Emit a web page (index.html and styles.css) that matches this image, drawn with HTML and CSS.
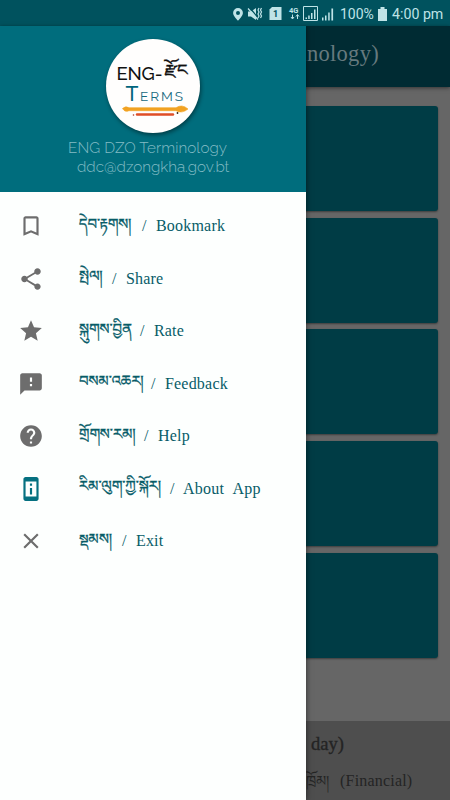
FILE: index.html
```html
<!DOCTYPE html>
<html lang="en">
<head>
<meta charset="utf-8">
<title>ENG DZO Terminology</title>
<link rel="stylesheet" href="styles.css">
</head>
<body>
<div class="phone">
  <div class="statusbar">
    <svg class="status-icons" width="108" height="26" viewBox="0 0 108 26" fill="#bfe3e7">
      <path fill-rule="evenodd" d="M6 7a4.900 4.900 0 0 0-4.900 4.900C1.100 15.200 6 19.500 6 19.500s4.900-4.300 4.900-7.600A4.900 4.900 0 0 0 6 7zm0 2.900a2 2 0 1 1 0 4 2 2 0 0 1 0-4z"/>
      <path d="M16 10.500h3l5-3.500v12l-5-3.500h-3z"/>
      <path d="M17.500 6.500l10 12" stroke="#00525e" stroke-width="1.300"/>
      <path d="M16 7.500l10 11M27 7l-1 2 1 2-1 2 1 2-1 2M29.500 7l-1 2 1 2-1 2 1 2-1 2" fill="none" stroke="#bfe3e7" stroke-width="1.200"/>
      <path d="M40 6h9.500v13H37.500V8.500z"/>
      <text class="sim" x="41" y="16">1</text>
      <text class="net" x="57" y="12">4G</text>
      <path d="M60.500 13.500v4m-1.500-1.500l1.500 2 1.500-2M65.500 18v-4m-1.500 1.500l1.500-2 1.500 2" fill="none" stroke="#bfe3e7"/>
      <path d="M71.500 5.500h14v14h-14z" fill="none" stroke="#bfe3e7"/>
      <path d="M73.500 16.500H75V18h-1.500zM76.200 14.500h1.500V18h-1.500zM79 12h1.500v6H79zM82 8.500h1.500V18H82zM90 16.500h1.500v3H90zM93 14.500h1.500v5H93zM96.200 11.500h1.500v8h-1.500zM99.400 7.500h1.700v12h-1.700z"/>
    </svg>
    <span class="percent">100%</span>
    <svg class="battery" width="9" height="14" viewBox="0 0 9 14"><path d="M2.500 0h4v2H9v12H0V2h2.500z" fill="#bfe3e7"/></svg>
    <span class="clock">4:00 pm</span>
  </div>
  <div class="appbar"><span class="title">inology)</span></div>
  <div class="cards">
    <div class="card"></div><div class="card"></div><div class="card"></div><div class="card"></div><div class="card"></div>
  </div>
  <div class="word">
    <div class="word-day">day)</div>
    <div class="word-term"><span class="dz-term">ཁྲོམ།</span><span class="term-en">(Financial)</span></div>
  </div>

  <div class="drawer">
    <div class="head">
      <svg class="logo" width="104" height="104" viewBox="0 0 104 104">
        <circle class="disc" cx="52" cy="50" r="47"/>
        <text class="logo-eng" x="15.500" y="43.500" textLength="46">ENG-</text>
        <text class="logo-dz" x="63.500" y="38.500" textLength="23" lengthAdjust="spacingAndGlyphs">རྫོང</text>
        <text class="logo-t" x="24.500" y="65">T</text>
        <text class="logo-erms" x="39" y="65" textLength="43">ERMS</text>
        <path d="M21.500 72.500q3-3 6.500-.8h47q6-4 12 1.300-6 5-12 1.700H28q-4 2-6.500-2.200z" fill="#f2a222" stroke="#f2a222" stroke-width=".6"/>
        <path d="M36 78.500h36" stroke="#df4e27" stroke-width="2.400" stroke-linecap="round"/>
        <circle cx="32.500" cy="79" r=".8" fill="#a32"/><circle cx="76.500" cy="77" r=".9" fill="#321"/>
      </svg>
      <div class="name">ENG DZO Terminology</div>
      <div class="mail">ddc@dzongkha.gov.bt</div>
    </div>
    <div class="menu">
      <div class="item"><svg class="icon" viewBox="0 0 24 24"><path d="M17 3H7c-1.100 0-1.990.9-1.990 2L5 21l7-3 7 3V5c0-1.100-.9-2-2-2zm0 15l-5-2.180L7 18V5h10v13z"/></svg><span class="dz w55">དེབ་རྟགས།</span><span class="en">/ Bookmark</span></div>
      <div class="item"><svg class="icon" viewBox="0 0 24 24"><path d="M18 16.080c-.76 0-1.440.3-1.960.77L8.910 12.700c.05-.23.09-.46.09-.7s-.04-.47-.09-.7l7.050-4.110c.54.5 1.250.81 2.040.81 1.660 0 3-1.340 3-3s-1.340-3-3-3-3 1.340-3 3c0 .24.04.47.09.7L8.040 9.810C7.500 9.310 6.790 9 6 9c-1.660 0-3 1.340-3 3s1.340 3 3 3c.79 0 1.500-.31 2.040-.81l7.120 4.160c-.05.21-.08.43-.08.65 0 1.610 1.310 2.920 2.920 2.920s2.920-1.310 2.920-2.920-1.310-2.920-2.920-2.920z"/></svg><span class="dz w25">སྤེལ།</span><span class="en">/ Share</span></div>
      <div class="item"><svg class="icon" viewBox="0 0 24 24"><path d="M12 17.270L18.180 21l-1.640-7.030L22 9.240l-7.190-.61L12 2 9.190 8.630 2 9.240l5.460 4.730L5.820 21z"/></svg><span class="dz w52">སྐུགས་བྱིན</span><span class="en">/ Rate</span></div>
      <div class="item"><svg class="icon" viewBox="0 0 24 24"><path d="M20 2H4c-1.100 0-1.990.9-1.990 2L2 22l4-4h14c1.100 0 2-.9 2-2V4c0-1.100-.9-2-2-2zm-7 12h-2v-2h2v2zm0-4h-2V6h2v4z"/></svg><span class="dz w64">བསམ་འཆར།</span><span class="en">/ Feedback</span></div>
      <div class="item"><svg class="icon" viewBox="0 0 24 24"><path d="M12 2C6.480 2 2 6.480 2 12s4.480 10 10 10 10-4.480 10-10S17.520 2 12 2zm1 17h-2v-2h2v2zm2.070-7.750l-.9.920C13.450 12.900 13 13.500 13 15h-2v-.5c0-1.100.45-2.100 1.170-2.830l1.240-1.260c.37-.36.59-.86.59-1.410 0-1.100-.9-2-2-2s-2 .9-2 2H8c0-2.210 1.790-4 4-4s4 1.790 4 4c0 .88-.36 1.680-.93 2.250z"/></svg><span class="dz w57">གྲོགས་རམ།</span><span class="en">/ Help</span></div>
      <div class="item"><svg class="icon teal" viewBox="0 0 24 24"><path d="M11 11h2v6h-2zM11 7h2v2h-2zM17 1.010L7 1c-1.100 0-2 .9-2 2v18c0 1.100.9 2 2 2h10c1.100 0 2-.9 2-2V3c0-1.100-.9-1.990-2-1.990zM17 19H7V5h10v14z"/></svg><span class="dz w82">རིམ་ལུག་ཀྱི་སྐོར།</span><span class="en">/ About App</span></div>
      <div class="item"><svg class="icon" viewBox="0 0 24 24"><path d="M19 6.410L17.590 5 12 10.590 6.410 5 5 6.410 10.590 12 5 17.590 6.410 19 12 13.410 17.590 19 19 17.590 13.410 12z"/></svg><span class="dz w34">སྡམས།</span><span class="en">/ Exit</span></div>
    </div>
  </div>
</div>
</body>
</html>
```
FILE: styles.css
```css
* { box-sizing: border-box; }
body { margin: 0; }
.phone { position: relative; width: 450px; height: 800px; overflow: hidden; background: #666; display: flex; flex-direction: column; }
.statusbar { height: 26px; flex: none; background: #00525e; display: flex; align-items: center; justify-content: flex-end; padding: 1px 7px 0 0; color: #bfe3e7; font-family: Roboto, sans-serif; white-space: nowrap; }
.percent { width: 34px; font-size: 14px; }
.battery { margin: 0 5px 0 4px; }
.clock { width: 51px; font-size: 14.2px; }
.sim { font: bold 9px Roboto, sans-serif; fill: #00525e; }
.net { font: bold 7.5px Roboto, sans-serif; }
.appbar { height: 61px; flex: none; background: #002b33; box-shadow: 0 1px 4px rgba(0,0,0,.5); padding: 15px 71px 0 0; text-align: right; }
.title { font: 22.5px/26px "Liberation Serif", serif; color: #667a7e; letter-spacing: .3px; }
.cards { flex: none; height: 634px; padding: 19px 12px 0; display: flex; flex-direction: column; gap: 6.700px; }
.card { height: 105px; flex: none; background: #003c45; border-radius: 3px; box-shadow: 0 1px 2px rgba(0,0,0,.4); }
.word { flex: 1; background: #4e4e4e; color: #242424; padding: 12px 0 0 306px; font-family: "Liberation Serif", "Noto Serif Tibetan", serif; }
.word-day { font-size: 18.5px; line-height: 22px; padding-left: 5px; -webkit-text-stroke: .35px #242424; }
.word-term { display: flex; margin-top: 15px; font-size: 16px; line-height: 22px; white-space: nowrap; }
.dz-term { width: 34px; font-size: 14.5px; }
.term-en { letter-spacing: .2px; }
.drawer { position: absolute; left: 0; top: 26px; width: 306px; height: 774px; background: #fdfffe; box-shadow: 0 0 6px rgba(0,0,0,.55); clip-path: inset(0 -14px 0 0); }
.head { height: 166px; background: #006d7d; color: #83bcc5; font-family: Raleway, Lato, sans-serif; font-weight: 300; padding-top: 10px; }
.logo { display: block; margin-left: 101px; }
.disc { fill: #fffefd; filter: drop-shadow(1px 2px 2px rgba(0,0,0,.45)); }
.logo-eng { font: 500 18.5px Raleway, Lato, sans-serif; fill: #111; }
.logo-dz { font: 15px "Noto Serif Tibetan", serif; fill: #111; stroke: #111; stroke-width: .4px; }
.logo-t { font: 500 21px Raleway, Lato, sans-serif; fill: #00657c; }
.logo-erms { font: 13.5px Raleway, Lato, sans-serif; fill: #17697e; }
.name, .mail { font-size: 15.2px; line-height: 19px; white-space: nowrap; }
.name { margin: -1px 0 0 68px; letter-spacing: .1px; }
.mail { margin-left: 77px; }
.menu { padding-top: 8px; }
.item { height: 52.500px; display: flex; align-items: center; padding-left: 18px; color: #075c68; }
.icon { width: 26px; height: 26px; flex: none; fill: #6d6d6d; margin-right: 35px; }
.teal { fill: #057080; }
.dz { font: 14.8px/30px "Noto Serif Tibetan", "Liberation Serif", serif; flex: none; white-space: nowrap; padding-top: 3px; -webkit-text-stroke: .3px #075c68; }
.en { font: 16px/30px "Liberation Serif", serif; letter-spacing: .22px; word-spacing: 5px; margin-left: 8px; white-space: nowrap; }
.w55 { width: 55px; }
.w25 { width: 25px; }
.w52 { width: 53px; }
.w64 { width: 64px; }
.w57 { width: 57px; }
.w82 { width: 83px; }
.w34 { width: 35px; }
```
